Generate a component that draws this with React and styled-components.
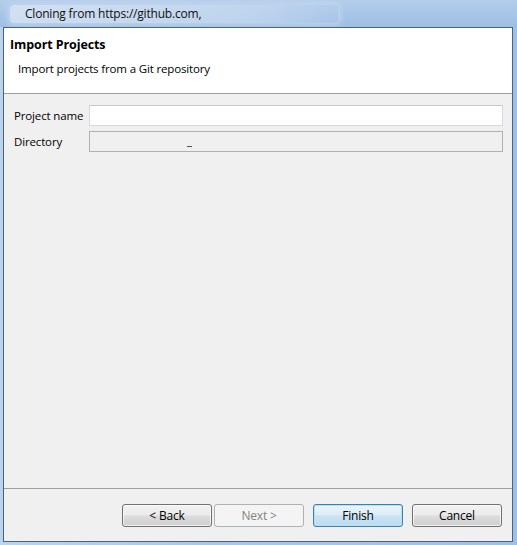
import React from 'react'
import styled, { createGlobalStyle } from 'styled-components'

const GlobalStyle = createGlobalStyle`
  html, body {
    margin: 0;
    padding: 0;
    background: #a8c5e6;
  }
  body {
    font-family: "Open Sans", "Noto Sans", "Liberation Sans", sans-serif;
    font-size: 12px;
    color: #000;
  }
`

const Window = styled.div`
  width: 517px;
  height: 545px;
  display: flex;
  flex-direction: column;
  background: linear-gradient(90deg, #bcd3ec 0%, #aac7e8 40%, #9fc0e6 100%);
  overflow: hidden;
`

const TitleBar = styled.div`
  height: 27px;
  flex: none;
  display: flex;
  align-items: center;
  padding-left: 10px;
  background: linear-gradient(180deg, #b4cdea 0%, #a8c6e7 50%, #9ebfe4 100%);
`

const TitleGlow = styled.div`
  height: 18px;
  width: 328px;
  display: flex;
  align-items: center;
  padding-left: 15px;
  box-sizing: border-box;
  border-radius: 4px;
  background: linear-gradient(90deg, rgba(222,232,245,0.75) 0%, rgba(200,218,240,0.7) 75%, rgba(190,212,238,0.2) 100%);
  box-shadow: 0 0 6px 3px rgba(205,221,241,0.6);
  font-size: 12px;
  letter-spacing: -0.2px;
  color: #111;
`

const Dialog = styled.div`
  flex: 1;
  margin: 0 4px 3px 3px;
  border: 1px solid #4d6178;
  background: #f0f0f0;
  display: flex;
  flex-direction: column;
`

const Header = styled.div`
  height: 66px;
  flex: none;
  background: #fff;
  border-bottom: 1px solid #a0a0a0;
  padding: 8px 0 0 6px;
  box-sizing: border-box;
`

const HeaderTitle = styled.div`
  font-weight: 700;
  font-size: 12.5px;
  letter-spacing: -0.1px;
  line-height: 18px;
`

const HeaderText = styled.div`
  margin: 6px 0 0 8px;
  line-height: 17px;
  font-size: 11.5px;
  letter-spacing: -0.15px;
`

const Form = styled.div`
  flex: 1;
  padding: 11px 9px 0 10px;
  display: grid;
  grid-template-columns: 75px 1fr;
  grid-auto-rows: 21px;
  row-gap: 5px;
  align-content: start;
  align-items: center;
`

const Label = styled.div`
  font-size: 11.5px;
  letter-spacing: -0.15px;
  line-height: 21px;
`

const Field = styled.div`
  height: 21px;
  box-sizing: border-box;
  border: 1px solid ${({ $disabled }) => ($disabled ? '#adb2b5' : '#d5d8dc')};
  border-top-color: ${({ $disabled }) => ($disabled ? '#adb2b5' : '#c4c7cb')};
  background: ${({ $disabled }) => ($disabled ? '#f0f0f0' : '#fff')};
  position: relative;
`

const Caret = styled.span`
  position: absolute;
  left: 97px;
  top: 14px;
  width: 5px;
  height: 1px;
  background: #555;
`

const Footer = styled.div`
  height: 53px;
  flex: none;
  border-top: 1px solid #a0a0a0;
  display: flex;
  justify-content: flex-end;
  align-items: flex-start;
  padding: 15px 10px 0 0;
  box-sizing: border-box;
`

const Button = styled.button`
  width: 90px;
  height: 23px;
  margin-left: ${({ $gap }) => $gap}px;
  padding: 0;
  border-radius: 3px;
  font-family: inherit;
  font-size: 12px;
  letter-spacing: -0.2px;
  color: #000;
  border: 1px solid #707070;
  box-shadow: inset 0 0 0 1px rgba(255,255,255,0.7);
  background: linear-gradient(180deg, #f2f2f2 0%, #ebebeb 48%, #dddddd 52%, #cfcfcf 100%);

  &:disabled {
    color: #838383;
    border-color: #adb2b5;
    background: #f4f4f4;
    box-shadow: none;
  }

  ${({ $default }) => $default && `
    border-color: #3c7fb1;
    box-shadow: inset 0 0 0 1px #b8e0f6;
    background: linear-gradient(180deg, #eaf5fc 0%, #dcedf8 48%, #c8e3f4 52%, #bddcf0 100%);
  `}
`

export default function App() {
  return (
    <Window>
      <GlobalStyle />
      <TitleBar>
        <TitleGlow>Cloning from https://github.com,</TitleGlow>
      </TitleBar>
      <Dialog>
        <Header>
          <HeaderTitle>Import Projects</HeaderTitle>
          <HeaderText>Import projects from a Git repository</HeaderText>
        </Header>
        <Form>
          <Label>Project name</Label>
          <Field />
          <Label>Directory</Label>
          <Field $disabled>
            <Caret />
          </Field>
        </Form>
        <Footer>
          <Button $gap={0}>&lt; Back</Button>
          <Button $gap={2} disabled>Next &gt;</Button>
          <Button $gap={9} $default>Finish</Button>
          <Button $gap={9}>Cancel</Button>
        </Footer>
      </Dialog>
    </Window>
  )
}
